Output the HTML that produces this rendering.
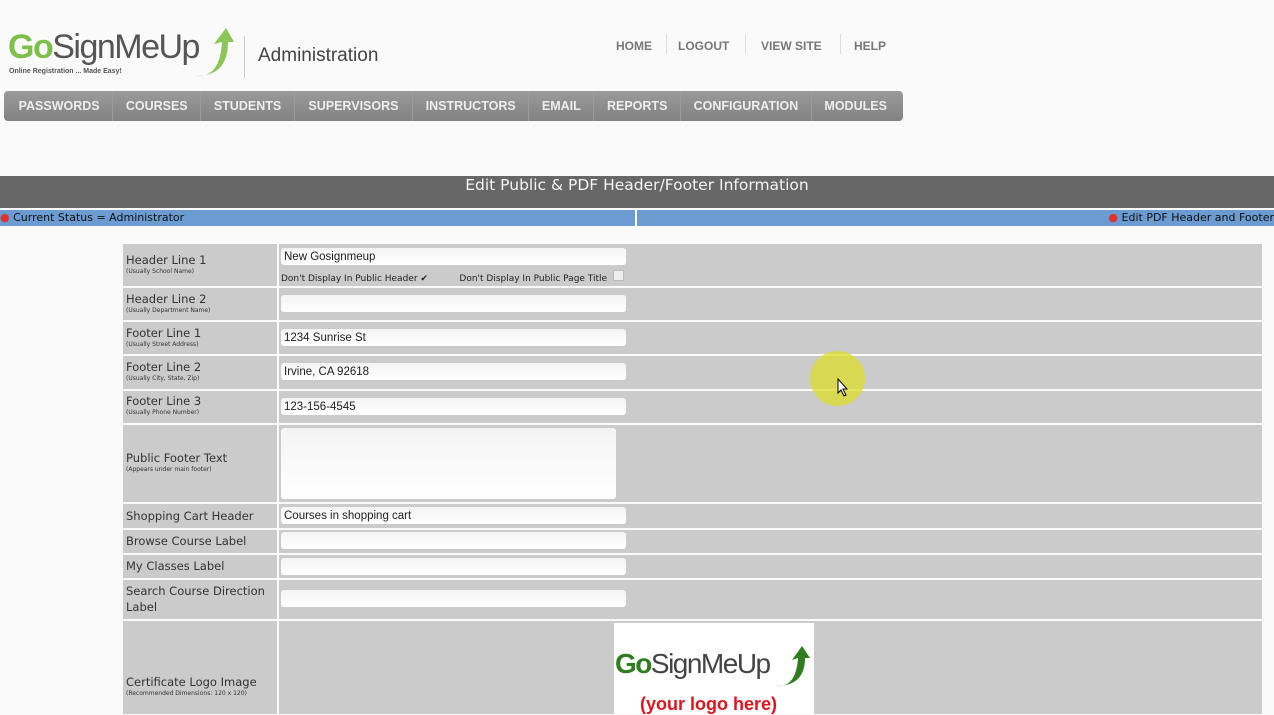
<!DOCTYPE html>
<html><head><style>
body{margin:0;width:1274px;height:714px;overflow:hidden;background:#fafafa;font-family:"DejaVu Sans","Liberation Sans",sans-serif;position:relative}
.a{position:absolute}
.top a{color:#777;font:bold 12px "Liberation Sans",sans-serif;text-decoration:none}
.nav{left:4px;top:91px;width:899px;height:30px;background:linear-gradient(#9a9a9a,#828282);border-radius:4px;display:flex}
.nav div{color:#eee;font:bold 12.5px "Liberation Sans",sans-serif;line-height:30px;padding:0 12.6px;border-right:1px solid #9c9c9c}
.lab{left:123px;width:154px;background:#cbcbcb;font-size:11.5px;color:#333;box-sizing:border-box;padding-left:3px}
.lab small{display:block;font-size:6px;line-height:9px}
.val{left:279px;width:983px;background:#cbcbcb}
.in{position:absolute;left:2px;width:345px;height:17px;background:linear-gradient(#f4f4f4,#fff);border-radius:3px;font:11.5px "Liberation Sans",sans-serif;color:#222;line-height:19px;padding-left:3px;box-sizing:border-box}
</style></head><body>
<div class="a" style="left:8px;top:28px;font:34px 'Liberation Sans',sans-serif;color:#555;letter-spacing:-1.5px"><b style="color:#7cc04a">Go</b>SignMeUp</div>
<div class="a" style="left:9px;top:68px;font:bold 7px 'Liberation Sans',sans-serif;color:#555">Online Registration ... Made Easy!</div>
<svg class="a" style="left:192px;top:26px" width="44" height="56"><path d="M4 50 Q28 52 30 16 L22 18 L34 2 L42 16 L36 16 Q36 50 4 50Z" fill="#8cc657"/></svg>
<div class="a" style="left:244px;top:36px;width:1px;height:42px;background:#ccc"></div>
<div class="a" style="left:258px;top:45px;font:19px 'Liberation Sans',sans-serif;color:#444">Administration</div>
<div class="a top" style="left:616px;top:38px;line-height:14px"><a>HOME</a></div>
<div class="a" style="left:666px;top:34px;width:1px;height:20px;background:#ddd"></div>
<div class="a top" style="left:678px;top:38px;line-height:14px"><a>LOGOUT</a></div>
<div class="a" style="left:745px;top:34px;width:1px;height:20px;background:#ddd"></div>
<div class="a top" style="left:761px;top:38px;line-height:14px"><a>VIEW SITE</a></div>
<div class="a" style="left:840px;top:34px;width:1px;height:20px;background:#ddd"></div>
<div class="a top" style="left:854px;top:38px;line-height:14px"><a>HELP</a></div>
<div class="a nav"><div style="padding-left:14.6px">PASSWORDS</div><div>COURSES</div><div>STUDENTS</div><div style="padding:0 13.6px">SUPERVISORS</div><div>INSTRUCTORS</div><div>EMAIL</div><div>REPORTS</div><div>CONFIGURATION</div><div style="border:0">MODULES</div></div>
<div class="a" style="left:0;top:176px;width:1274px;height:32px;background:#676767;color:#f4f4f4;font-size:15.5px;text-align:center;line-height:19px">Edit Public &amp; PDF Header/Footer Information</div>
<div class="a" style="left:0;top:210px;width:635px;height:16px;background:#6b9bd0;font-size:11px;color:#111;line-height:16px"><span style="color:#d33">●</span> Current Status = Administrator</div>
<div class="a" style="left:637px;top:210px;width:637px;height:16px;background:#6b9bd0;font-size:11px;color:#111;line-height:16px;text-align:right;white-space:nowrap;overflow:hidden"><span style="color:#d33">●</span> Edit PDF Header and Footer</div>

<div class="a lab" style="top:244px;height:42px;padding-top:9px">Header Line 1<small>(Usually School Name)</small></div>
<div class="a val" style="top:244px;height:42px"><div class="in" style="top:4px">New Gosignmeup</div><div class="a" style="left:2px;top:26px;font-size:9px;color:#222;white-space:nowrap">Don't Display In Public Header ✔ &nbsp;&nbsp;&nbsp;&nbsp;&nbsp;&nbsp;&nbsp;&nbsp;&nbsp; Don't Display In Public Page Title &nbsp;<span style="display:inline-block;width:9px;height:9px;background:#eee;border:1px solid #bbb"></span></div></div>
<div class="a lab" style="top:288px;height:32px;padding-top:4px">Header Line 2<small>(Usually Department Name)</small></div>
<div class="a val" style="top:288px;height:32px"><div class="in" style="top:7px"></div></div>
<div class="a lab" style="top:322px;height:32px;padding-top:4px">Footer Line 1<small>(Usually Street Address)</small></div>
<div class="a val" style="top:322px;height:32px"><div class="in" style="top:7px">1234 Sunrise St</div></div>
<div class="a lab" style="top:356px;height:33px;padding-top:4px">Footer Line 2<small>(Usually City, State, Zip)</small></div>
<div class="a val" style="top:356px;height:33px"><div class="in" style="top:7px">Irvine, CA 92618</div></div>
<div class="a lab" style="top:391px;height:32px;padding-top:3px">Footer Line 3<small>(Usually Phone Number)</small></div>
<div class="a val" style="top:391px;height:32px"><div class="in" style="top:7px">123-156-4545</div></div>
<div class="a lab" style="top:425px;height:77px;padding-top:26px">Public Footer Text<small>(Appears under main footer)</small></div>
<div class="a val" style="top:425px;height:77px"><div class="in" style="top:3px;width:335px;height:71px"></div></div>
<div class="a lab" style="top:504px;height:24px;line-height:24px">Shopping Cart Header</div>
<div class="a val" style="top:504px;height:24px"><div class="in" style="top:3px">Courses in shopping cart</div></div>
<div class="a lab" style="top:530px;height:23px;line-height:23px">Browse Course Label</div>
<div class="a val" style="top:530px;height:23px"><div class="in" style="top:2px"></div></div>
<div class="a lab" style="top:555px;height:23px;line-height:23px">My Classes Label</div>
<div class="a val" style="top:555px;height:23px"><div class="in" style="top:3px"></div></div>
<div class="a lab" style="top:580px;height:39px;padding-top:3px;line-height:16px">Search Course Direction Label</div>
<div class="a val" style="top:580px;height:39px"><div class="in" style="top:10px"></div></div>
<div class="a lab" style="top:621px;height:93px;padding-top:54px">Certificate Logo Image<small>(Recommended Dimensions: 120 x 120)</small></div>
<div class="a val" style="top:621px;height:93px"></div>
<div class="a" style="left:614px;top:623px;width:200px;height:91px;background:#fff"></div>
<div class="a" style="left:615px;top:648px;font:28px 'Liberation Sans',sans-serif;color:#444;letter-spacing:-1.5px"><b style="color:#2e7d1e">Go</b>SignMeUp</div>
<svg class="a" style="left:774px;top:644px" width="40" height="48"><path d="M2 42 Q22 44 24 14 L18 16 L28 2 L36 14 L31 14 Q31 42 2 42Z" fill="#2e7d1e"/></svg>
<div class="a" style="left:640px;top:694px;font:bold 18px 'Liberation Sans',sans-serif;color:#e0141e">(your logo here)</div>
<div class="a" style="left:810px;top:351px;width:55px;height:55px;border-radius:50%;background:rgba(220,220,40,.75)"></div>
<svg class="a" style="left:837px;top:378px" width="12" height="20"><path d="M1 1 L1 15 L4 12 L7 18 L9 17 L6 11 L10 11Z" fill="#fff" stroke="#000" stroke-width="1"/></svg>
</body></html>
